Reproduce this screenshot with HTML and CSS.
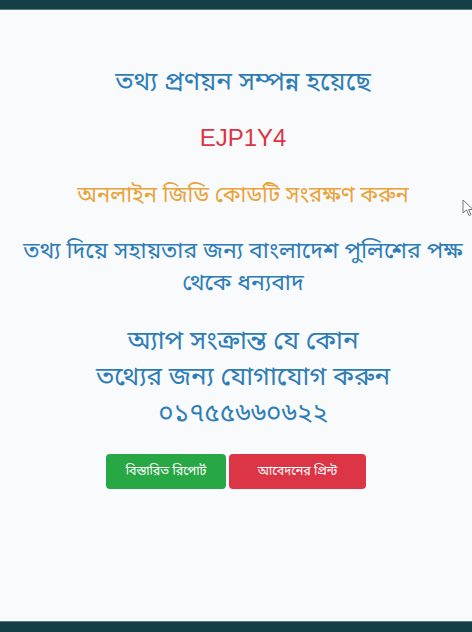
FILE: index.html
```html
<!DOCTYPE html>
<html lang="bn">
<head>
<meta charset="utf-8">
<link rel="stylesheet" href="styles.css">
</head>
<body>
<div class="topbar"></div>
<main class="content">
  <section class="message">
    <h2 class="title">তথ্য প্রণয়ন সম্পন্ন হয়েছে</h2>
    <div class="code">EJP1Y4</div>
    <p class="save">অনলাইন জিডি কোডটি সংরক্ষণ করুন</p>
    <p class="thanks">তথ্য দিয়ে সহায়তার জন্য বাংলাদেশ পুলিশের পক্ষ<br>থেকে ধন্যবাদ</p>
    <p class="contact">অ্যাপ সংক্রান্ত যে কোন<br>তথ্যের জন্য যোগাযোগ করুন<br>০১৭৫৫৬৬০৬২২</p>
  </section>
  <div class="actions">
    <a class="btn btn-green">বিস্তারিত রিপোর্ট</a>
    <a class="btn btn-red">আবেদনের প্রিন্ট</a>
  </div>
</main>
<div class="bottombar"></div>
<svg class="cursor" width="12" height="18" viewBox="0 0 12 18"><path d="M1 1 L1 14 L4.5 11 L7 16.5 L9 15.5 L6.5 10.5 L11 10.5 Z" fill="#fff" stroke="#777" stroke-width="1"/></svg>
</body>
</html>
```
FILE: styles.css
```css
html, body {
  margin: 0;
  padding: 0;
  height: 100%;
}
body {
  background: #f8fafc;
  font-family: "Noto Sans Bengali", "Noto Sans", "Liberation Sans", sans-serif;
  display: flex;
  flex-direction: column;
  width: 472px;
  height: 632px;
  overflow: hidden;
  position: relative;
}
.topbar {
  height: 9px;
  background: #143f47;
  border-bottom: 1px solid #5a7a80;
}
.bottombar {
  height: 10px;
  background: #143f47;
  border-top: 1px solid #5a7a80;
}
.content {
  flex: 1;
  display: flex;
  flex-direction: column;
  align-items: center;
  text-align: center;
}
.message {
  align-self: stretch;
  display: flex;
  flex-direction: column;
  align-items: center;
  padding-left: 14px;
}
.title {
  margin: 58px 0 0;
  font-size: 26px;
  font-weight: normal;
  color: #2f7db6;
  line-height: 32px;
}
.code {
  margin-top: 24px;
  font-family: "Liberation Sans", Arial, sans-serif;
  font-size: 24px;
  color: #dc3545;
  line-height: 28px;
}
.save {
  margin: 30px 0 0;
  font-size: 22px;
  color: #e9a33a;
  line-height: 30px;
}
.thanks {
  margin: 24px 0 0;
  font-size: 23px;
  color: #2f7db6;
  line-height: 32px;
}
.contact {
  margin: 25px 0 0;
  font-size: 26px;
  color: #2f7db6;
  line-height: 36px;
}
.actions {
  margin-top: 21px;
  display: flex;
  gap: 3px;
}
.btn {
  display: flex;
  align-items: center;
  justify-content: center;
  height: 35px;
  border-radius: 4px;
  color: #fff;
  font-size: 12.5px;
}
.btn-green {
  width: 120px;
  background: #28a745;
}
.btn-red {
  width: 137px;
  background: #dc3545;
}
.cursor {
  position: absolute;
  left: 462px;
  top: 199px;
}
```
